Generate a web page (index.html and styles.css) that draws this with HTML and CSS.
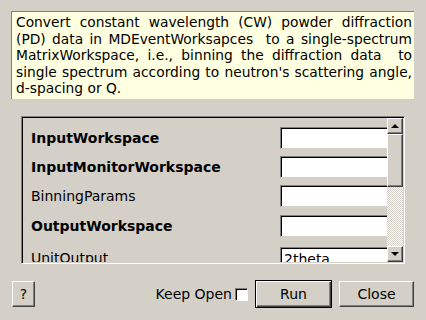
FILE: index.html
```html
<!DOCTYPE html>
<html lang="en">
<head>
  <meta charset="UTF-8">
  <title>ConvertCWPDMDToSpectra input dialog</title>
  <link rel="stylesheet" href="styles.css">
</head>
<body>
  <div class="dialog">
    <p class="desc">Convert constant wavelength (CW) powder diffraction (PD) data in MDEventWorksapces&nbsp; to a single-spectrum MatrixWorkspace, i.e., binning the diffraction data&nbsp; to single spectrum according to neutron's scattering angle, d-spacing or Q.</p>

    <div class="panel">
      <div class="rows">
        <div class="row">
          <label class="mandatory">InputWorkspace</label>
          <div class="field"></div>
        </div>
        <div class="row">
          <label class="mandatory">InputMonitorWorkspace</label>
          <div class="field"></div>
        </div>
        <div class="row">
          <label>BinningParams</label>
          <div class="field"></div>
        </div>
        <div class="row">
          <label class="mandatory">OutputWorkspace</label>
          <div class="field"></div>
        </div>
        <div class="row">
          <label>UnitOutput</label>
          <div class="field combo">2theta</div>
        </div>
      </div>
      <div class="scrollbar">
        <div class="sb-btn"><span class="arrow up"></span></div>
        <div class="sb-thumb"></div>
        <div class="sb-trough"></div>
        <div class="sb-btn"><span class="arrow down"></span></div>
      </div>
    </div>

    <div class="buttons">
      <button class="btn help-btn">?</button>
      <span class="spacer"></span>
      <label class="keep-open">Keep Open <span class="check"></span></label>
      <button class="btn run-btn">Run</button>
      <button class="btn close-btn">Close</button>
    </div>
  </div>
</body>
</html>
```

FILE: styles.css
```css
* {
  margin: 0;
  padding: 0;
  box-sizing: border-box;
}

body {
  background-color: #d4d0c8;
  font-family: "DejaVu Sans", sans-serif;
  font-size: 14px;
  color: #000;
  width: 426px;
  height: 320px;
  overflow: hidden;
}

.dialog {
  display: flex;
  flex-direction: column;
}

.desc {
  margin: 11px 12px 0 11px;
  height: 88px;
  padding: 2px 2px 0 4px;
  background-color: #ffffe1;
  border-top: 1px solid #808080;
  border-left: 1px solid #808080;
  font-size: 13.8px;
  line-height: 16.5px;
  text-align: justify;
}

.panel {
  margin: 17px 21px 0 21px;
  height: 148px;
  display: flex;
  border-top: 1px solid #808080;
  border-left: 1px solid #808080;
  border-right: 1px solid #fff;
  border-bottom: 1px solid #fff;
  box-shadow: inset 1px 1px 0 #000, inset -1px -1px 0 #d4d0c8;
  padding: 1px;
}

.rows {
  flex: 1;
  overflow: hidden;
  display: grid;
  grid-template-rows: 29px 29px 29px 31px 33px;
  padding-top: 5px;
  padding-left: 8px;
}

.row {
  display: flex;
  align-items: center;
}

.row label {
  width: 249px;
  white-space: nowrap;
}

.row label.mandatory {
  font-weight: bold;
}

.field {
  width: 116px;
  flex-shrink: 0;
  height: 22px;
  background-color: #fff;
  border-top: 1px solid #808080;
  border-left: 1px solid #808080;
  border-bottom: 1px solid #d4d0c8;
  box-shadow: inset 1px 1px 0 #000;
}

.combo {
  padding: 2px 0 0 3px;
  line-height: 18px;
}

.scrollbar {
  width: 16px;
  display: flex;
  flex-direction: column;
}

.sb-btn,
.sb-thumb {
  background-color: #d4d0c8;
  border-top: 1px solid #fff;
  border-left: 1px solid #fff;
  border-right: 1px solid #404040;
  border-bottom: 1px solid #404040;
  box-shadow: inset -1px -1px 0 #808080;
}

.sb-btn {
  height: 16px;
  display: flex;
  align-items: center;
  justify-content: center;
}

.sb-thumb {
  height: 53px;
}

.sb-trough {
  flex: 1;
  background-color: #d4d0c8;
  background-image: repeating-conic-gradient(#fff 0 25%, #d4d0c8 0 50%);
  background-size: 2px 2px;
}

.arrow {
  width: 0;
  height: 0;
  border-left: 4px solid transparent;
  border-right: 4px solid transparent;
}

.arrow.up {
  border-bottom: 4px solid #000;
}

.arrow.down {
  border-top: 4px solid #000;
}

.buttons {
  display: flex;
  align-items: center;
  margin: 16px 12px 0 12px;
  height: 28px;
}

.spacer {
  flex: 1;
}

.btn {
  font-family: "DejaVu Sans", sans-serif;
  font-size: 14px;
  color: #000;
  height: 26px;
  background-color: #d4d0c8;
  border-top: 1px solid #fff;
  border-left: 1px solid #fff;
  border-right: 1px solid #404040;
  border-bottom: 1px solid #404040;
  box-shadow: inset -1px -1px 0 #808080;
}

.help-btn {
  width: 23px;
}

.keep-open {
  display: flex;
  align-items: center;
  margin-right: 7px;
}

.check {
  width: 13px;
  height: 13px;
  margin-left: 3px;
  background-color: #fff;
  border-top: 1px solid #808080;
  border-left: 1px solid #808080;
  border-right: 1px solid #fff;
  border-bottom: 1px solid #fff;
  box-shadow: inset 1px 1px 0 #000;
}

.run-btn {
  width: 77px;
  height: 28px;
  border: 1px solid #000;
  box-shadow: inset 1px 1px 0 #fff, inset -1px -1px 0 #404040, inset -2px -2px 0 #808080;
}

.close-btn {
  width: 75px;
  margin-left: 7px;
}
```
